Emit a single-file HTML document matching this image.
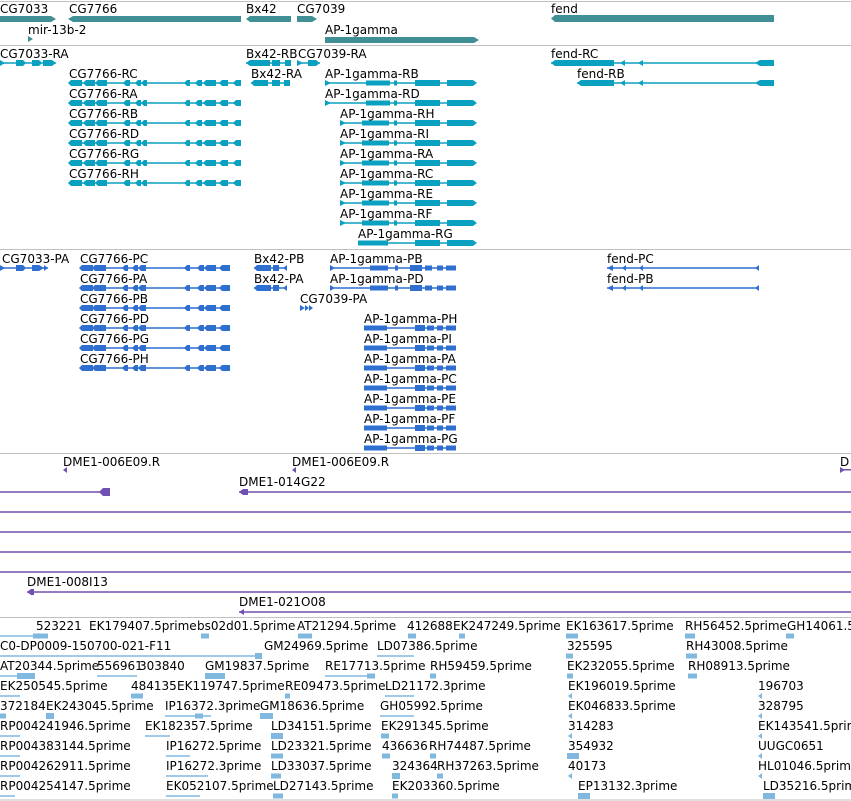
<!DOCTYPE html>
<html><head><meta charset="utf-8"><style>
html,body{margin:0;padding:0;background:#fff;width:851px;height:801px;overflow:hidden}
svg{display:block}
text{font-family:"DejaVu Sans","Liberation Sans",sans-serif;font-size:12px;fill:#000}
</style></head><body>
<svg width="851" height="801" viewBox="0 0 851 801" xmlns="http://www.w3.org/2000/svg">
<defs>
<g id="t7766"><line x1="69" y1="0" x2="241" y2="0" stroke="currentColor" stroke-width="1.5"/>
<g fill="currentColor"><rect x="71" y="-3" width="11" height="6"/><rect x="86" y="-3" width="9" height="6"/><rect x="98" y="-3" width="9" height="6"/><rect x="126" y="-3" width="4" height="6"/><rect x="138" y="-3" width="3" height="6"/><rect x="144" y="-3" width="3" height="6"/><rect x="187" y="-3" width="3" height="6"/><rect x="198" y="-3" width="4" height="6"/><rect x="206" y="-3" width="10" height="6"/><rect x="222" y="-3" width="6" height="6"/><rect x="236" y="-3" width="5" height="6"/>
<polygon points="68,0 71,-3 71,3"/><polygon points="83,0 86,-3 86,3"/><polygon points="95,0 98,-3 98,3"/><polygon points="123,0 126,-3 126,3"/><polygon points="135,0 138,-3 138,3"/><polygon points="141,0 144,-3 144,3"/><polygon points="184,0 187,-3 187,3"/><polygon points="195,0 198,-3 198,3"/><polygon points="203,0 206,-3 206,3"/><polygon points="219,0 222,-3 222,3"/><polygon points="233,0 236,-3 236,3"/></g></g>
<g id="p7766"><line x1="80" y1="0" x2="230" y2="0" stroke="currentColor" stroke-width="1.5"/>
<g fill="currentColor"><rect x="82" y="-3" width="11" height="6"/><rect x="95" y="-3" width="11" height="6"/><rect x="125" y="-3" width="3" height="6"/><rect x="135" y="-3" width="3" height="6"/><rect x="141" y="-3" width="5" height="6"/><rect x="187" y="-3" width="3" height="6"/><rect x="200" y="-3" width="4" height="6"/><rect x="207" y="-3" width="9" height="6"/><rect x="222" y="-3" width="8" height="6"/>
<polygon points="79,0 82,-3 82,3"/><polygon points="92,0 95,-3 95,3"/><polygon points="122,0 125,-3 125,3"/><polygon points="132,0 135,-3 135,3"/><polygon points="138,0 141,-3 141,3"/><polygon points="184,0 187,-3 187,3"/><polygon points="197,0 200,-3 200,3"/><polygon points="204,0 207,-3 207,3"/><polygon points="219,0 222,-3 222,3"/></g></g>
<g id="tAPa"><line x1="325" y1="0" x2="475" y2="0" stroke="currentColor" stroke-width="1.5"/>
<g fill="currentColor"><polygon points="325,-3 331,0 325,3"/><rect x="366" y="-2.5" width="24" height="5"/><rect x="394" y="-2.5" width="3" height="5"/><rect x="415" y="-3" width="25" height="6"/><rect x="447" y="-3" width="26" height="6"/><polygon points="473,-3 477,0 473,3"/></g></g>
<g id="tAPb"><line x1="340" y1="0" x2="475" y2="0" stroke="currentColor" stroke-width="1.5"/>
<g fill="currentColor"><polygon points="340,-3 346,0 340,3"/><rect x="362" y="-2.5" width="27" height="5"/><rect x="394" y="-2.5" width="3" height="5"/><rect x="415" y="-3" width="25" height="6"/><rect x="447" y="-3" width="26" height="6"/><polygon points="473,-3 477,0 473,3"/></g></g>
<g id="tAPc"><line x1="358" y1="0" x2="475" y2="0" stroke="currentColor" stroke-width="1.5"/>
<g fill="currentColor"><rect x="358" y="-2.5" width="30" height="5"/><rect x="415" y="-3" width="25" height="6"/><rect x="447" y="-3" width="26" height="6"/><polygon points="473,-3 477,0 473,3"/></g></g>
<g id="pAPa"><line x1="330" y1="0" x2="456" y2="0" stroke="currentColor" stroke-width="1.5"/>
<g fill="currentColor"><polygon points="330,-3 335,0 330,3"/><rect x="370" y="-2.5" width="18" height="5"/><rect x="395" y="-2.5" width="3" height="5"/><rect x="410" y="-3" width="12" height="6"/><rect x="425" y="-2.5" width="7" height="5"/><rect x="437" y="-2.5" width="6" height="5"/><rect x="446" y="-2.5" width="10" height="5"/></g></g>
<g id="pAPb"><line x1="364" y1="0" x2="456" y2="0" stroke="currentColor" stroke-width="1.5"/>
<g fill="currentColor"><rect x="364" y="-2.5" width="23" height="5"/><rect x="415" y="-3" width="10" height="6"/><rect x="427" y="-2.5" width="7" height="5"/><rect x="437" y="-2.5" width="6" height="5"/><rect x="446" y="-2.5" width="10" height="5"/></g></g>
<polygon id="la" points="0,0 4,-3 4,3"/>
</defs>

<g stroke="#c0c0c0" stroke-width="1">
<line x1="0" y1="1.5" x2="851" y2="1.5"/><line x1="0" y1="45.5" x2="851" y2="45.5"/><line x1="0" y1="249.5" x2="851" y2="249.5"/><line x1="0" y1="453.5" x2="851" y2="453.5"/><line x1="0" y1="617.5" x2="851" y2="617.5"/><line x1="0" y1="800" x2="851" y2="800"/>
</g>

<g fill="#3f8f94">
<rect x="0" y="16" width="51" height="6"/><polygon points="51,16 56,19 51,22"/>
<rect x="73" y="16" width="168" height="6"/><polygon points="73,16 68,19 73,22"/>
<rect x="250" y="16" width="41" height="6"/><polygon points="250,16 246,19 250,22"/>
<rect x="297" y="16" width="15" height="6"/><polygon points="312,16 317,19 312,22"/>
<polygon points="28,36 33,39 28,42"/>
<rect x="325" y="37" width="149" height="6"/><polygon points="474,37 479,40 474,43"/>
<rect x="555" y="15" width="219" height="7"/><polygon points="555,15 551,18.5 555,22"/>
</g>
<text x="0" y="13">CG7033</text><text x="69" y="13">CG7766</text><text x="246" y="13">Bx42</text><text x="297" y="13">CG7039</text><text x="551" y="13">fend</text>
<text x="28" y="34">mir-13b-2</text><text x="325" y="34">AP-1gamma</text>

<g color="#0aa0c0" fill="#0aa0c0">
<line x1="0" y1="63" x2="56" y2="63" stroke="#0aa0c0" stroke-width="1.5"/>
<polygon points="0,60 5,63 0,66"/><rect x="16" y="60" width="7" height="6"/><polygon points="23,60 26,63 23,66"/><rect x="32" y="60" width="7" height="6"/><polygon points="39,60 42,63 39,66"/><rect x="43" y="60" width="9" height="6"/><polygon points="52,60 56,63 52,66"/>
<rect x="250" y="60" width="20" height="6"/><polygon points="250,60 246,63 250,66"/><rect x="272" y="60" width="8" height="6"/><rect x="285" y="60" width="6" height="6"/><line x1="246" y1="63" x2="291" y2="63" stroke="#0aa0c0" stroke-width="1.5"/>
<rect x="254" y="80" width="14" height="6"/><polygon points="254,80 251,83 254,86"/><rect x="272" y="80" width="8" height="6"/><rect x="284" y="80" width="6" height="6"/><line x1="251" y1="83" x2="290" y2="83" stroke="#0aa0c0" stroke-width="1.5"/>
<polygon points="297,60 303,63 297,66"/><rect x="308" y="60" width="8" height="6"/><polygon points="316,60 320,63 316,66"/><line x1="297" y1="63" x2="320" y2="63" stroke="#0aa0c0" stroke-width="1.5"/>
<line x1="551" y1="63" x2="773" y2="63" stroke="#0aa0c0" stroke-width="1.5"/><rect x="555" y="60" width="59" height="6"/><polygon points="555,60 551,63 555,66"/><polygon points="620,63 625,60 625,66"/><polygon points="638,63 643,60 643,66"/><rect x="760" y="60" width="14" height="6"/><polygon points="755,63 760,60 760,66"/>
<line x1="577" y1="83" x2="773" y2="83" stroke="#0aa0c0" stroke-width="1.5"/><rect x="581" y="80" width="33" height="6"/><polygon points="581,80 577,83 581,86"/><polygon points="620,83 625,80 625,86"/><polygon points="638,83 643,80 643,86"/><rect x="760" y="80" width="14" height="6"/><polygon points="755,83 760,80 760,86"/>
<use href="#t7766" y="83"/><use href="#t7766" y="103"/><use href="#t7766" y="123"/><use href="#t7766" y="143"/><use href="#t7766" y="163"/><use href="#t7766" y="183"/>
<use href="#tAPa" y="83"/><use href="#tAPa" y="103"/>
<use href="#tAPb" y="123"/><use href="#tAPb" y="143"/><use href="#tAPb" y="163"/><use href="#tAPb" y="183"/><use href="#tAPb" y="203"/><use href="#tAPb" y="223"/>
<use href="#tAPc" y="243"/>
</g>
<text x="0" y="58">CG7033-RA</text><text x="246" y="58">Bx42-RB</text><text x="298" y="58">CG7039-RA</text><text x="551" y="58">fend-RC</text>
<text x="69" y="78">CG7766-RC</text><text x="251" y="78">Bx42-RA</text><text x="325" y="78">AP-1gamma-RB</text><text x="577" y="78">fend-RB</text>
<text x="69" y="98">CG7766-RA</text><text x="325" y="98">AP-1gamma-RD</text>
<text x="69" y="118">CG7766-RB</text><text x="340" y="118">AP-1gamma-RH</text>
<text x="69" y="138">CG7766-RD</text><text x="340" y="138">AP-1gamma-RI</text>
<text x="69" y="158">CG7766-RG</text><text x="340" y="158">AP-1gamma-RA</text>
<text x="69" y="178">CG7766-RH</text><text x="340" y="178">AP-1gamma-RC</text>
<text x="340" y="198">AP-1gamma-RE</text>
<text x="340" y="218">AP-1gamma-RF</text>
<text x="358" y="238">AP-1gamma-RG</text>

<g color="#2f6fd0" fill="#2f6fd0">
<line x1="0" y1="268" x2="48" y2="268" stroke="#2f6fd0" stroke-width="1.5"/><polygon points="0,265 5,268 0,271"/><rect x="16" y="265" width="7" height="6"/><polygon points="23,265 26,268 23,271"/><rect x="32" y="265" width="7" height="6"/><polygon points="39,265 44,268 39,271"/><polygon points="44,265 48,268 44,271"/>
<line x1="254" y1="268" x2="287" y2="268" stroke="#2f6fd0" stroke-width="1.5"/><rect x="257" y="265" width="14" height="6"/><polygon points="257,265 254,268 257,271"/><rect x="273" y="265" width="6" height="6"/><polygon points="283,268 287,265 287,271"/>
<line x1="254" y1="288" x2="287" y2="288" stroke="#2f6fd0" stroke-width="1.5"/><rect x="257" y="285" width="14" height="6"/><polygon points="257,285 254,288 257,291"/><rect x="273" y="285" width="6" height="6"/><polygon points="283,288 287,285 287,291"/>
<polygon points="300,305 305,308 300,311"/><polygon points="305,305 309,308 305,311"/><polygon points="309,305 313,308 309,311"/>
<line x1="607" y1="268" x2="759" y2="268" stroke="#2f6fd0" stroke-width="1.5"/><polygon points="607,268 613,265 613,271"/><polygon points="622,268 626,265 626,271"/><polygon points="639,268 643,265 643,271"/><polygon points="755,268 759,265 759,271"/>
<line x1="607" y1="288" x2="759" y2="288" stroke="#2f6fd0" stroke-width="1.5"/><polygon points="607,288 613,285 613,291"/><polygon points="622,288 626,285 626,291"/><polygon points="639,288 643,285 643,291"/><polygon points="755,288 759,285 759,291"/>
<use href="#p7766" y="268"/><use href="#p7766" y="288"/><use href="#p7766" y="308"/><use href="#p7766" y="328"/><use href="#p7766" y="348"/><use href="#p7766" y="368"/>
<use href="#pAPa" y="268"/><use href="#pAPa" y="288"/>
<use href="#pAPb" y="328"/><use href="#pAPb" y="348"/><use href="#pAPb" y="368"/><use href="#pAPb" y="388"/><use href="#pAPb" y="408"/><use href="#pAPb" y="428"/><use href="#pAPb" y="448"/>
</g>
<text x="2" y="263">CG7033-PA</text><text x="80" y="263">CG7766-PC</text><text x="254" y="263">Bx42-PB</text><text x="330" y="263">AP-1gamma-PB</text><text x="607" y="263">fend-PC</text>
<text x="80" y="283">CG7766-PA</text><text x="254" y="283">Bx42-PA</text><text x="330" y="283">AP-1gamma-PD</text><text x="607" y="283">fend-PB</text>
<text x="80" y="303">CG7766-PB</text><text x="300" y="303">CG7039-PA</text>
<text x="80" y="323">CG7766-PD</text><text x="364" y="323">AP-1gamma-PH</text>
<text x="80" y="343">CG7766-PG</text><text x="364" y="343">AP-1gamma-PI</text>
<text x="80" y="363">CG7766-PH</text><text x="364" y="363">AP-1gamma-PA</text>
<text x="364" y="383">AP-1gamma-PC</text>
<text x="364" y="403">AP-1gamma-PE</text>
<text x="364" y="423">AP-1gamma-PF</text>
<text x="364" y="443">AP-1gamma-PG</text>

<g stroke="#7050b0" stroke-width="1.5">
<line x1="0" y1="492" x2="104" y2="492"/><line x1="239" y1="492" x2="851" y2="492"/>
<line x1="0" y1="512" x2="851" y2="512"/><line x1="0" y1="532" x2="851" y2="532"/><line x1="0" y1="552" x2="851" y2="552"/><line x1="0" y1="572" x2="851" y2="572"/>
<line x1="27" y1="592" x2="851" y2="592"/><line x1="239" y1="612" x2="851" y2="612"/>
</g>
<g fill="#7050b0">
<polygon points="63,470 67,467 67,473"/><polygon points="292,470 296,467 296,473"/><polygon points="840,467 845,470 840,473"/><rect x="840" y="469" width="11" height="1.5"/>
<rect x="103" y="488" width="7" height="8"/><polygon points="99,492 103,488 103,496"/>
<rect x="243" y="489" width="5" height="6"/><polygon points="239,492 243,489 243,495"/>
<polygon points="27,592 31,589 31,595"/><rect x="31" y="589" width="3" height="6"/>
<polygon points="239,612 244,609 244,615"/>
</g>
<text x="63" y="466">DME1-006E09.R</text><text x="292" y="466">DME1-006E09.R</text><text x="840" y="466">D</text>
<text x="239" y="486">DME1-014G22</text>
<text x="27" y="586">DME1-008I13</text>
<text x="239" y="606">DME1-021O08</text>

<g fill="#80b8e0" stroke="#80b8e0">
<g stroke-width="1.5">
<line x1="0" y1="636" x2="38" y2="636"/><line x1="0" y1="656" x2="262" y2="656"/><line x1="0" y1="676" x2="35" y2="676"/><line x1="97" y1="676" x2="137" y2="676"/>
<line x1="205" y1="676" x2="225" y2="676"/><line x1="325" y1="676" x2="375" y2="676"/><line x1="377" y1="656" x2="414" y2="656"/>
<line x1="0" y1="696" x2="20" y2="696"/><line x1="385" y1="696" x2="414" y2="696"/>
<line x1="165" y1="716" x2="211" y2="716"/><line x1="380" y1="716" x2="414" y2="716"/>
<line x1="0" y1="736" x2="20" y2="736"/><line x1="145" y1="736" x2="170" y2="736"/>
<line x1="0" y1="756" x2="20" y2="756"/><line x1="166" y1="756" x2="190" y2="756"/>
<line x1="0" y1="776" x2="20" y2="776"/><line x1="166" y1="776" x2="208" y2="776"/>
<line x1="0" y1="796" x2="15" y2="796"/><line x1="166" y1="796" x2="200" y2="796"/>
</g>
<g stroke="none">
<polygon points="38,633 44,636 38,639"/><rect x="33" y="633.5" width="15" height="5"/>
<rect x="201" y="633.5" width="8" height="5"/><rect x="298" y="633.5" width="14" height="5"/><rect x="408" y="633.5" width="8" height="5"/><rect x="459" y="633.5" width="6" height="5"/>
<rect x="566" y="633.5" width="12" height="5"/><rect x="685" y="633.5" width="10" height="5"/><rect x="786" y="633.5" width="8" height="5"/>
<rect x="255" y="653" width="7" height="6"/><rect x="566" y="653.5" width="7" height="5"/><rect x="686" y="653.5" width="11" height="5"/>
<rect x="17" y="673" width="18" height="6"/><rect x="205" y="673" width="20" height="6"/><rect x="367" y="673.5" width="8" height="5"/><rect x="430" y="673.5" width="6" height="5"/><rect x="567" y="673.5" width="6" height="5"/><rect x="688" y="673.5" width="9" height="5"/>
<rect x="131" y="693.5" width="12" height="5"/><rect x="285" y="693.5" width="5" height="5"/><use href="#la" x="568" y="696"/><use href="#la" x="758" y="696"/>
<rect x="0" y="713.5" width="6" height="5"/><rect x="46" y="713" width="8" height="6"/><rect x="195" y="713.5" width="8" height="5"/><rect x="260" y="713" width="13" height="6"/><use href="#la" x="568" y="716"/><use href="#la" x="758" y="716"/>
<rect x="271" y="733" width="12" height="6"/><rect x="381" y="733.5" width="8" height="5"/><use href="#la" x="568" y="736"/><use href="#la" x="758" y="736"/>
<rect x="271" y="753.5" width="12" height="5"/><rect x="382" y="753.5" width="8" height="5"/><rect x="430" y="753.5" width="6" height="5"/><rect x="567" y="753" width="12" height="6"/><use href="#la" x="758" y="756"/>
<rect x="271" y="773.5" width="10" height="5"/><rect x="392" y="773" width="8" height="6"/><rect x="437" y="773.5" width="6" height="5"/><use href="#la" x="568" y="776"/><use href="#la" x="758" y="776"/>
<rect x="273" y="793.5" width="10" height="5"/><rect x="392" y="793.5" width="6" height="5"/><rect x="578" y="793" width="12" height="6"/><rect x="763" y="793" width="12" height="6"/>
</g></g>
<text x="36" y="630">523221</text><text x="89" y="630">EK179407.5prime</text><text x="197" y="630">bs02d01.5prime</text><text x="297" y="630">AT21294.5prime</text><text x="407" y="630">412688</text><text x="453" y="630">EK247249.5prime</text><text x="566" y="630">EK163617.5prime</text><text x="685" y="630">RH56452.5prime</text><text x="787" y="630">GH14061.5</text>
<text x="0" y="650">C0-DP0009-150700-021-F11</text><text x="264" y="650">GM24969.5prime</text><text x="377" y="650">LD07386.5prime</text><text x="567" y="650">325595</text><text x="686" y="650">RH43008.5prime</text>
<text x="0" y="670">AT20344.5prime</text><text x="97" y="670">556961</text><text x="139" y="670">303840</text><text x="205" y="670">GM19837.5prime</text><text x="325" y="670">RE17713.5prime</text><text x="430" y="670">RH59459.5prime</text><text x="567" y="670">EK232055.5prime</text><text x="688" y="670">RH08913.5prime</text>
<text x="0" y="690">EK250545.5prime</text><text x="131" y="690">484135</text><text x="177" y="690">EK119747.5prime</text><text x="285" y="690">RE09473.5prime</text><text x="385" y="690">LD21172.3prime</text><text x="568" y="690">EK196019.5prime</text><text x="758" y="690">196703</text>
<text x="0" y="710">372184</text><text x="46" y="710">EK243045.5prime</text><text x="165" y="710">IP16372.3prime</text><text x="260" y="710">GM18636.5prime</text><text x="380" y="710">GH05992.5prime</text><text x="568" y="710">EK046833.5prime</text><text x="758" y="710">328795</text>
<text x="0" y="730">RP004241946.5prime</text><text x="145" y="730">EK182357.5prime</text><text x="271" y="730">LD34151.5prime</text><text x="381" y="730">EK291345.5prime</text><text x="568" y="730">314283</text><text x="758" y="730">EK143541.5prime</text>
<text x="0" y="750">RP004383144.5prime</text><text x="166" y="750">IP16272.5prime</text><text x="271" y="750">LD23321.5prime</text><text x="382" y="750">436636</text><text x="429" y="750">RH74487.5prime</text><text x="568" y="750">354932</text><text x="758" y="750">UUGC0651</text>
<text x="0" y="770">RP004262911.5prime</text><text x="166" y="770">IP16272.3prime</text><text x="271" y="770">LD33037.5prime</text><text x="392" y="770">324364</text><text x="437" y="770">RH37263.5prime</text><text x="568" y="770">40173</text><text x="758" y="770">HL01046.5prime</text>
<text x="0" y="790">RP004254147.5prime</text><text x="166" y="790">EK052107.5prime</text><text x="273" y="790">LD27143.5prime</text><text x="392" y="790">EK203360.5prime</text><text x="578" y="790">EP13132.3prime</text><text x="763" y="790">LD35216.5prime</text>
</svg>
</body></html>
